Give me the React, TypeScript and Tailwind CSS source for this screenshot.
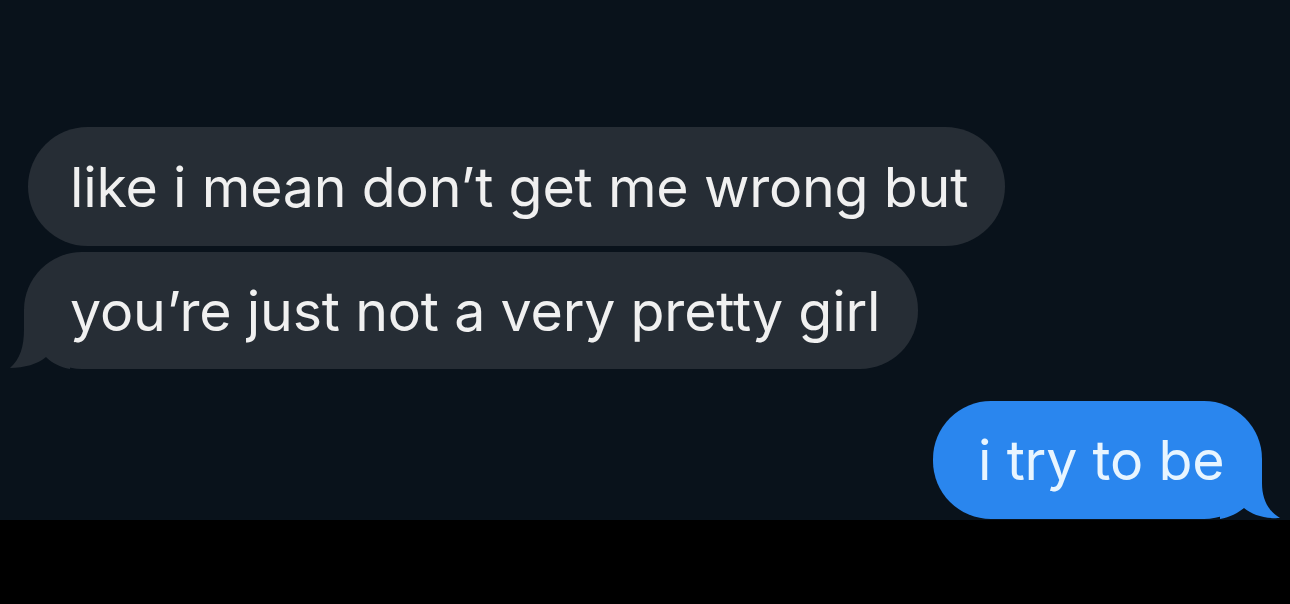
import React from "react";

const font = { fontFamily: "Inter, 'Noto Sans', 'Liberation Sans', sans-serif" };

export default function App() {
  return (
    <div className="w-[1290px] h-[604px] bg-[#09121b] flex flex-col overflow-hidden" style={font}>
      <div className="flex-1 flex flex-col pt-[127px]">
        <div className="ml-[28px] w-[977px] h-[119px] rounded-[60px] bg-[#262d35] flex items-center pl-[42px]">
          <span className="text-[55.5px] leading-none text-[#f0f0f0] tracking-[-0.2px]">like i mean don’t get me wrong but</span>
        </div>
        <div className="relative mt-[6px] ml-[24px] w-[894px] h-[117px] rounded-[58px] bg-[#262d35] flex items-center pl-[46px]">
          <svg className="absolute left-[-14px] bottom-[0px]" width="60" height="60" viewBox="0 0 60 60">
            <path d="M14 0 L14 20 C14 38 10 50 0 59 C14 59 28 55 36 48 C42 54 50 58 60 60 L60 0 Z" fill="#262d35" />
          </svg>
          <span className="relative text-[55.5px] leading-none text-[#f0f0f0] tracking-[-0.2px]">you’re just not a very pretty girl</span>
        </div>
        <div className="flex justify-end mt-[32px] mr-[28px]">
          <div className="relative w-[329px] h-[118px] rounded-[58px] bg-[#2a86ee] flex items-center pl-[45px]">
            <svg className="absolute right-[-18px] bottom-[0px]" width="60" height="60" viewBox="0 0 60 60">
              <path d="M42 0 L42 24 C42 40 48 52 60 59 C46 60 32 56 24 49 C18 54 10 58 0 60 L0 0 Z" fill="#2a86ee" />
            </svg>
            <span className="relative text-[55.5px] leading-none text-[#e8f5ff] tracking-[-0.2px]">i try to be</span>
          </div>
        </div>
      </div>
      <div className="h-[84px] bg-black shrink-0" />
    </div>
  );
}
